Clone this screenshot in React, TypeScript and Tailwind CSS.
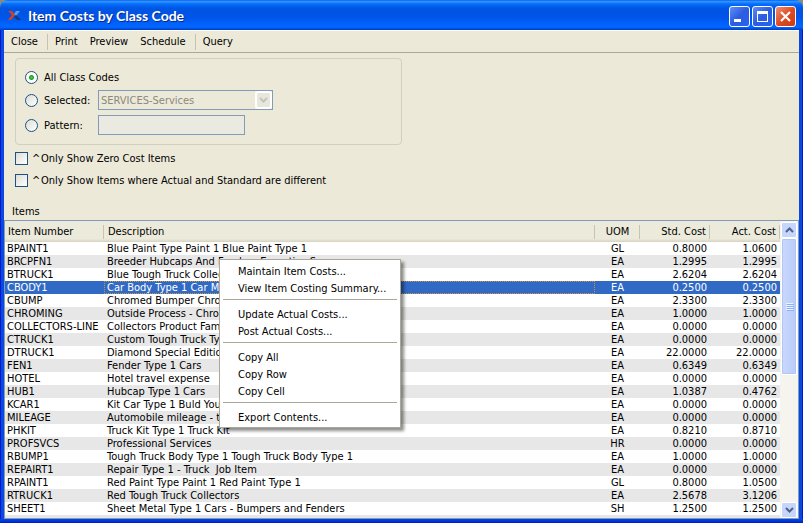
import React from 'react';

type Item = [code: string, description: string, uom: string, std: string, act: string];

const items: Item[] = [
  ['BPAINT1', 'Blue Paint Type Paint 1 Blue Paint Type 1', 'GL', '0.8000', '1.0600'],
  ['BRCPFN1', 'Breeder Hubcaps And Fenders Expertise S', 'EA', '1.2995', '1.2995'],
  ['BTRUCK1', 'Blue Tough Truck Collectors', 'EA', '2.6204', '2.6204'],
  ['CBODY1', 'Car Body Type 1 Car Metal Body', 'EA', '0.2500', '0.2500'],
  ['CBUMP', 'Chromed Bumper Chromed', 'EA', '2.3300', '2.3300'],
  ['CHROMING', 'Outside Process - Chroming', 'EA', '1.0000', '1.0000'],
  ['COLLECTORS-LINE', 'Collectors Product Family', 'EA', '0.0000', '0.0000'],
  ['CTRUCK1', 'Custom Tough Truck Type 1', 'EA', '0.0000', '0.0000'],
  ['DTRUCK1', 'Diamond Special Edition', 'EA', '22.0000', '22.0000'],
  ['FEN1', 'Fender Type 1 Cars', 'EA', '0.6349', '0.6349'],
  ['HOTEL', 'Hotel travel expense', 'EA', '0.0000', '0.0000'],
  ['HUB1', 'Hubcap Type 1 Cars', 'EA', '1.0387', '0.4762'],
  ['KCAR1', 'Kit Car Type 1 Buld Your Own', 'EA', '0.0000', '0.0000'],
  ['MILEAGE', 'Automobile mileage - travel', 'EA', '0.0000', '0.0000'],
  ['PHKIT', 'Truck Kit Type 1 Truck Kit', 'EA', '0.8210', '0.8710'],
  ['PROFSVCS', 'Professional Services', 'HR', '0.0000', '0.0000'],
  ['RBUMP1', 'Tough Truck Body Type 1 Tough Truck Body Type 1', 'EA', '1.0000', '1.0000'],
  ['REPAIRT1', 'Repair Type 1 - Truck\u00a0 Job Item', 'EA', '0.0000', '0.0000'],
  ['RPAINT1', 'Red Paint Type Paint 1 Red Paint Type 1', 'GL', '0.8000', '1.0500'],
  ['RTRUCK1', 'Red Tough Truck Collectors', 'EA', '2.5678', '3.1206'],
  ['SHEET1', 'Sheet Metal Type 1 Cars - Bumpers and Fenders', 'SH', '1.2500', '1.2500'],
];

const selectedCode = 'CBODY1';

const menuGroups = [
  ['Maintain Item Costs...', 'View Item Costing Summary...'],
  ['Update Actual Costs...', 'Post Actual Costs...'],
  ['Copy All', 'Copy Row', 'Copy Cell'],
  ['Export Contents...'],
];

const toolbarGroups = [['Close'], ['Print', 'Preview', 'Schedule'], ['Query']];

function TitleBar() {
  const button =
    'flex size-[21px] items-center justify-center rounded-[3px] border border-white';
  return (
    <header className="flex h-[30px] shrink-0 items-center rounded-t-lg bg-[linear-gradient(180deg,#0058ee_0%,#3593ff_4%,#288eff_7%,#127dff_10%,#036ffc_14%,#0262ee_20%,#0057e5_27%,#0054e3_40%,#0055eb_60%,#0061fc_78%,#0066ff_88%,#0062f5_92%,#0043cf_98%,#003dd7_100%)] pt-0.5 pr-[7px] pl-2">
      <svg width="13" height="10" viewBox="0 0 13 10" aria-hidden="true">
        <path d="M0 0h4l3 4-4 5H0l4-5z" fill="#d8401c" />
        <path d="M8 0h4L8 5 6 3z" fill="#5aa0e0" />
        <path d="M6 6l2-2 5 5H9z" fill="#123a80" />
      </svg>
      <h1 className="ml-[7px] flex-1 font-[Lato,'Open_Sans',sans-serif] text-[14px] leading-4 font-bold text-white [text-shadow:1px_1px_#0a2a8a]">
        Item Costs by Class Code
      </h1>
      <div className="flex gap-0.5">
        <button aria-label="Minimize" className={`${button} bg-linear-to-br from-[#5f8df5] via-[#2c5ce0] to-[#2a63f0]`}>
          <svg width="17" height="17" viewBox="0 0 17 17" aria-hidden="true">
            <path d="M3 11h7v3H3z" fill="#fff" />
          </svg>
        </button>
        <button aria-label="Maximize" className={`${button} bg-linear-to-br from-[#5f8df5] via-[#2c5ce0] to-[#2a63f0]`}>
          <svg width="17" height="17" viewBox="0 0 17 17" aria-hidden="true">
            <path d="M3 3h11v11H3zM4 6v7h9V6z" fill="#fff" fillRule="evenodd" />
          </svg>
        </button>
        <button aria-label="Close window" className={`${button} bg-linear-to-br from-[#ee9070] via-[#e04a22] to-[#cc3a10]`}>
          <svg width="17" height="17" viewBox="0 0 17 17" aria-hidden="true">
            <path d="M4 4l9 9M13 4l-9 9" stroke="#fff" strokeWidth="2.2" />
          </svg>
        </button>
      </div>
    </header>
  );
}

function Toolbar() {
  return (
    <nav className="flex h-[23px] shrink-0 items-center border-t border-b border-t-white border-b-[#aca899]">
      {toolbarGroups.map((group, i) => (
        <div
          key={group[0]}
          className={`flex h-4 items-center pr-[3px] pl-px ${i > 0 ? 'border-l border-[#c5c2b2]' : ''}`}
        >
          {group.map((label) => (
            <button key={label} className="px-[6px]">
              {label}
            </button>
          ))}
        </div>
      ))}
    </nav>
  );
}

const radio =
  'size-[13px] appearance-none rounded-full border border-[#1d5281] bg-[linear-gradient(135deg,#dcdcd7,#ffffff)] checked:bg-[radial-gradient(circle,#4fd04b_0,#21a121_2px,#ffffff_3px)]';

function Filters() {
  return (
    <section className="shrink-0 px-[11px] pt-[5px]">
      <fieldset className="flex h-[87px] max-w-[387px] flex-col rounded-[4px] border border-[#d0d0bf] pt-2 pl-[9px]">
        <div className="flex h-5 items-center">
          <input id="all" type="radio" name="class" defaultChecked className={radio} />
          <label htmlFor="all" className="pl-[6px]">All Class Codes</label>
        </div>
        <div className="flex h-[26px] items-center">
          <input id="selected" type="radio" name="class" className={radio} />
          <label htmlFor="selected" className="w-[60px] pl-[6px]">Selected:</label>
          <div className="grid h-5 w-[175px]">
            <select
              aria-label="Class code"
              disabled
              className="col-start-1 row-start-1 appearance-none border border-[#7f9db9] pl-0.5 text-[#8b897c]"
            >
              <option>SERVICES-Services</option>
            </select>
            <span className="pointer-events-none col-start-1 row-start-1 m-px flex w-[17px] items-center justify-center justify-self-end rounded-[3px] border-2 border-white bg-[#e8e7de]">
              <svg width="9" height="6" viewBox="0 0 9 6" aria-hidden="true">
                <path d="M1 1l3.500 3.500L8 1" fill="none" stroke="#c6c4b8" strokeWidth="2" />
              </svg>
            </span>
          </div>
        </div>
        <div className="flex h-6 items-center">
          <input id="pattern" type="radio" name="class" className={radio} />
          <label htmlFor="pattern" className="w-[60px] pl-[6px]">Pattern:</label>
          <input aria-label="Pattern text" disabled className="h-5 w-[147px] border border-[#7f9db9] bg-[#ebeae2] px-1" />
        </div>
      </fieldset>
      <div className="flex flex-col pt-[2px]">
        {['Only Show Zero Cost Items', 'Only Show Items where Actual and Standard are different'].map((text) => (
          <label key={text} className="flex h-[22px] items-center">
            <input
              type="checkbox"
              className="size-[13px] appearance-none border border-[#1d5281] bg-[linear-gradient(135deg,#dcdcd7,#ffffff)]"
            />
            <span className="w-[13px] pl-1">^</span>
            <span>{text}</span>
          </label>
        ))}
      </div>
    </section>
  );
}

function ScrollBar() {
  const arrow =
    'flex size-4 items-center justify-center rounded-[2px] border border-white bg-[#c6d5fc] text-[#4d6185]';
  return (
    <div className="flex w-[18px] shrink-0 flex-col bg-[#f5f4ee] px-px pt-px">
      <button aria-label="Scroll up" className={arrow}>
        <svg width="9" height="6" viewBox="0 0 9 6" aria-hidden="true">
          <path d="M1 5l3.500-3.500L8 5" fill="none" stroke="currentColor" strokeWidth="2" />
        </svg>
      </button>
      <div className="flex grow flex-col">
        <div className="flex h-[52%] flex-col items-center justify-center gap-px rounded-[2px] border border-white bg-linear-to-r from-[#cad8fd] to-[#b9cbf9] shadow-[inset_0_0_0_1px_#b2c6f5]">
          {[0, 1, 2, 3].map((n) => (
            <span key={n} className="h-px w-[7px] bg-[#eef4fe] shadow-[1px_1px_#8cb0f8]" />
          ))}
        </div>
      </div>
      <button aria-label="Scroll down" className={arrow}>
        <svg width="9" height="6" viewBox="0 0 9 6" aria-hidden="true">
          <path d="M1 1l3.500 3.500L8 1" fill="none" stroke="currentColor" strokeWidth="2" />
        </svg>
      </button>
    </div>
  );
}

function ItemTable() {
  const divider = 'bg-[linear-gradient(#c7c5b2,#c7c5b2)] bg-[length:1px_14px] bg-right bg-no-repeat';
  return (
    <div className="flex min-h-0 flex-1 overflow-hidden border border-[#7f9db9] bg-white">
      <div className="min-w-0 flex-1 overflow-hidden">
        <table className="w-full table-fixed border-collapse whitespace-pre">
          <colgroup>
            <col className="w-[99px]" />
            <col />
            <col className="w-[45px]" />
            <col className="w-[70px]" />
            <col className="w-[70px]" />
          </colgroup>
          <thead>
            <tr className="h-[21px] bg-[linear-gradient(#ebeadb_85%,#d6d2c2)]">
              <th className={`pl-[3px] text-left font-normal ${divider}`}>Item Number</th>
              <th className={`pl-1 text-left font-normal ${divider}`}>Description</th>
              <th className={`font-normal ${divider}`}>UOM</th>
              <th className={`pr-1 text-right font-normal ${divider}`}>Std. Cost</th>
              <th className={`pr-1 text-right font-normal ${divider}`}>Act. Cost</th>
            </tr>
          </thead>
          <tbody className="leading-3">
            {items.map(([code, description, uom, std, act]) => {
              const selected = code === selectedCode;
              return (
                <tr key={code} className={`h-[13px] ${selected ? 'bg-[#316ac5] text-white' : 'even:bg-[#e7e7e7]'}`}>
                  <td className="pt-px pl-0.5">{code}</td>
                  <td className={`overflow-hidden pt-px pl-[3px] ${selected ? 'outline-1 -outline-offset-1 outline-[#ce953a] outline-dotted' : ''}`}>
                    {description}
                  </td>
                  <td className="pt-px text-center">{uom}</td>
                  <td className="pt-px pr-[3px] text-right">{std}</td>
                  <td className="pt-px pr-[3px] text-right">{act}</td>
                </tr>
              );
            })}
            <tr className="h-[13px] bg-[#e7e7e7]">
              <td colSpan={5} />
            </tr>
          </tbody>
        </table>
      </div>
      <ScrollBar />
    </div>
  );
}

function ContextMenu() {
  return (
    <div
      role="menu"
      className="absolute top-[259px] left-[219px] w-[182px] border border-[#aca899] bg-white px-[3px] pt-[3px] pb-px shadow-[3px_3px_3px_rgba(0,0,0,0.45)]"
    >
      {menuGroups.map((group, i) => (
        <div key={group[0]}>
          {i > 0 && <hr className="mt-[2px] mb-[6px] border-[#aca899]" />}
          {group.map((label) => (
            <button key={label} role="menuitem" className="block h-[17px] w-full pl-[15px] text-left">
              {label}
            </button>
          ))}
        </div>
      ))}
    </div>
  );
}

export default function App() {
  return (
    <div className="relative flex h-screen flex-col overflow-hidden bg-[#8a8a80] font-['DejaVu_Sans_Condensed','DejaVu_Sans',sans-serif] text-[11px] leading-[13px] text-black">
      <TitleBar />
      <div className="flex min-h-0 flex-1 border-x border-[#0019cf] bg-[#0a48e0]">
        <main className="mx-[3px] flex min-w-0 flex-1 flex-col bg-[#ece9d8]">
          <Toolbar />
          <Filters />
          <h2 className="shrink-0 pt-[14px] pb-[2px] pl-2">Items</h2>
          <ItemTable />
        </main>
      </div>
      <footer className="h-1 shrink-0 bg-linear-to-b from-[#0a48e0] to-[#0019cf]" />
      <ContextMenu />
    </div>
  );
}
